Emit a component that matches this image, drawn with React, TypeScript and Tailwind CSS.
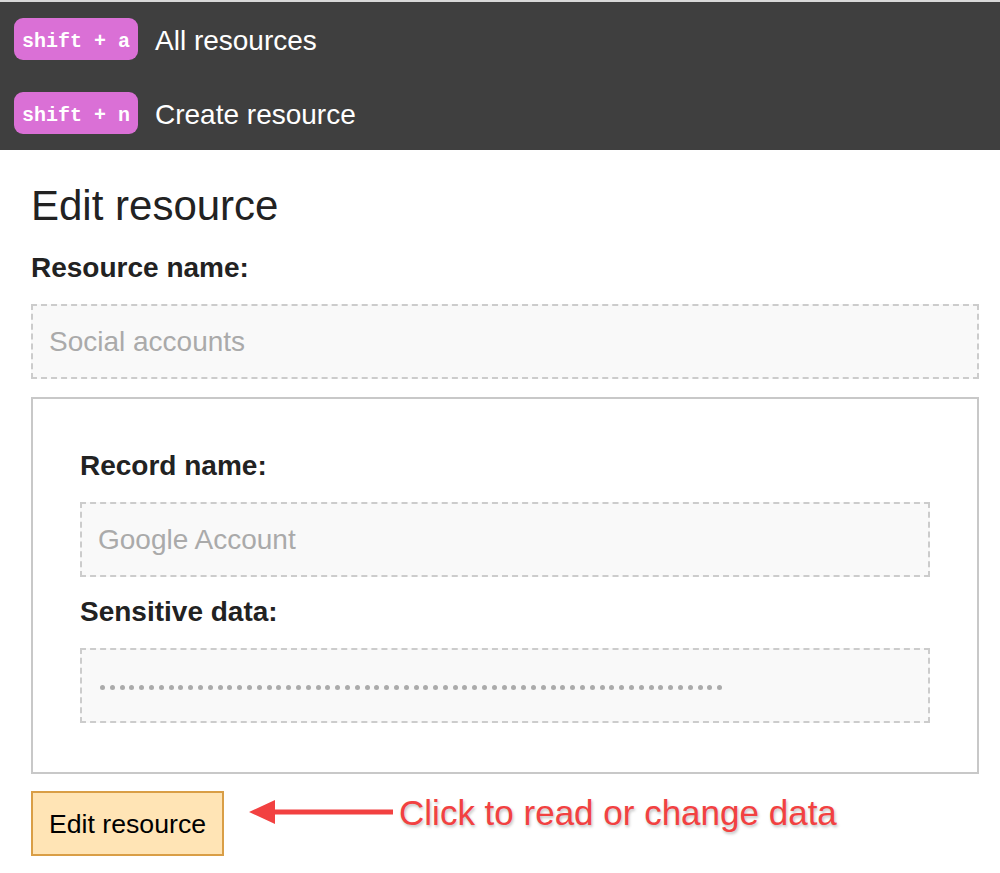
import React from "react";

const shortcuts = [
  { keys: "shift + a", label: "All resources" },
  { keys: "shift + n", label: "Create resource" },
];

function Field({ label, children }: { label: string; children: React.ReactNode }) {
  return (
    <div className="flex flex-col">
      <label className="mb-[20px] text-[28px] leading-[32px] font-bold text-[#222]">
        {label}
      </label>
      <div className="border-2 border-dashed border-[#ccc] bg-[#f9f9f9] pl-[16px] pt-[20px] pb-[19px] h-[75px] flex items-center">
        {children}
      </div>
    </div>
  );
}

function Dots({ count }: { count: number }) {
  return (
    <div className="flex items-center gap-[4.8px] pl-[2px] pt-[2px]">
      {Array.from({ length: count }).map((_, i) => (
        <span key={i} className="block w-[5px] h-[5px] rounded-full bg-[#ababab]" />
      ))}
    </div>
  );
}

export default function App() {
  return (
    <div className="min-h-[873px] bg-white font-['Liberation_Sans',Arial,sans-serif]">
      <div className="h-[2px] bg-[#d8d8d8]" />
      <nav className="bg-[#3f3f3f] py-[16px] pl-[14px] flex flex-col gap-[32px]">
        {shortcuts.map((s) => (
          <div key={s.keys} className="flex items-center h-[42px] gap-[17px]">
            <span className="h-[42px] w-[124px] pt-[5px] flex items-center justify-center rounded-[9px] bg-[#da70d6] text-white font-bold text-[20px] font-['Liberation_Mono',monospace] whitespace-pre">
              {s.keys}
            </span>
            <span className="pt-[3px] text-white text-[28px] leading-[32px]">{s.label}</span>
          </div>
        ))}
      </nav>

      <main className="pl-[31px] pr-[21px]">
        <h1 className="mt-[32px] text-[42px] leading-[48px] text-[#222]">Edit resource</h1>

        <div className="mt-[22px]">
          <Field label="Resource name:">
            <span className="text-[28px] leading-[32px] text-[#aaa]">Social accounts</span>
          </Field>
        </div>

        <div className="mt-[18px] border-2 border-[#c8c8c8] pt-[51px] px-[47px] pb-[49px] flex flex-col gap-[19px]">
          <Field label="Record name:">
            <span className="text-[28px] leading-[32px] text-[#aaa]">Google Account</span>
          </Field>
          <Field label="Sensitive data:">
            <Dots count={64} />
          </Field>
        </div>

        <div className="mt-[17px] flex items-start">
          <button className="h-[65px] border-2 border-[#d99e46] bg-[#ffe4b5] px-[16px] text-[26.67px] text-black">
            Edit resource
          </button>
          <svg className="ml-[23px] mt-[6px]" width="148" height="30" viewBox="0 0 148 30">
            <path d="M2 15 L28 3 L28 12.5 L146 12.5 L146 17.5 L28 17.5 L28 27 Z" fill="#f24141" />
          </svg>
          <span className="ml-[4px] mt-[2px] text-[35px] leading-[40px] text-[#f24141] [text-shadow:1px_2px_3px_rgba(0,0,0,0.25)]">
            Click to read or change data
          </span>
        </div>
      </main>
    </div>
  );
}
